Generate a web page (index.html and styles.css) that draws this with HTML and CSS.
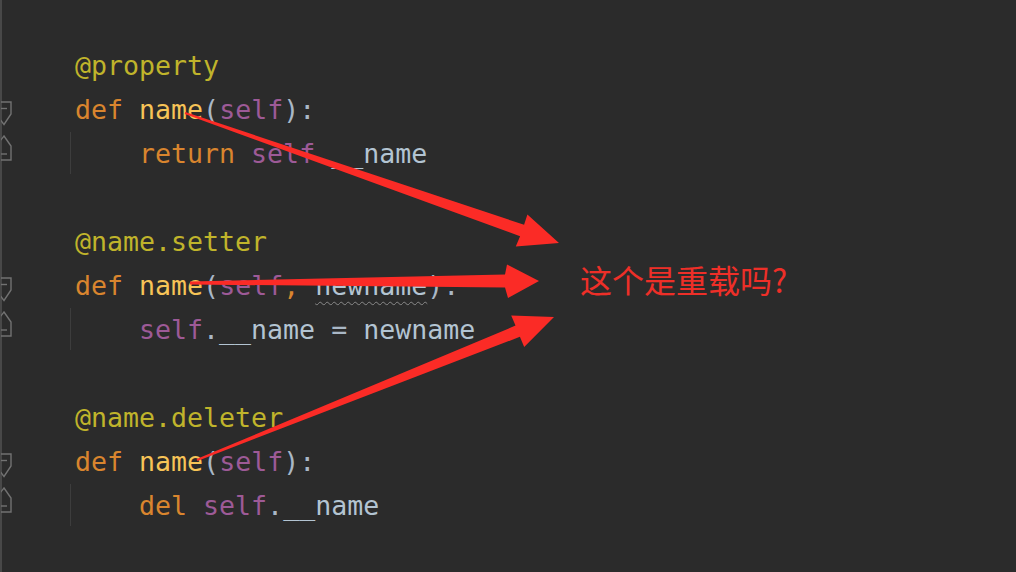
FILE: index.html
```html
<!DOCTYPE html>
<html lang="zh">
<head>
<meta charset="utf-8">
<title>property</title>
<link rel="stylesheet" href="styles.css">
</head>
<body>
<div class="editor">
  <div class="gutter">
    <div class="gline"></div>
    <div class="gline"><svg class="fold fold-start" width="12" height="25" viewBox="0 0 12 25"><path d="M-5 1H10V13L3 23.5L-5 13Z"/><path d="M-3 7.5H6"/></svg></div>
    <div class="gline"><svg class="fold fold-end" width="12" height="26" viewBox="0 0 12 26"><path d="M3 1L10 11V25H-5V11Z"/><path d="M-3 19H6"/></svg></div>
    <div class="gline"></div>
    <div class="gline"></div>
    <div class="gline"><svg class="fold fold-start" width="12" height="25" viewBox="0 0 12 25"><path d="M-5 1H10V13L3 23.5L-5 13Z"/><path d="M-3 7.5H6"/></svg></div>
    <div class="gline"><svg class="fold fold-end" width="12" height="26" viewBox="0 0 12 26"><path d="M3 1L10 11V25H-5V11Z"/><path d="M-3 19H6"/></svg></div>
    <div class="gline"></div>
    <div class="gline"></div>
    <div class="gline"><svg class="fold fold-start" width="12" height="25" viewBox="0 0 12 25"><path d="M-5 1H10V13L3 23.5L-5 13Z"/><path d="M-3 7.5H6"/></svg></div>
    <div class="gline"><svg class="fold fold-end" width="12" height="26" viewBox="0 0 12 26"><path d="M3 1L10 11V25H-5V11Z"/><path d="M-3 19H6"/></svg></div>
  </div>
  <div class="code">
    <div class="line"><span class="tx"><span class="dec">@property</span></span></div>
    <div class="line"><span class="tx"><span class="kw">def</span> <span class="fn">name</span><span class="p">(</span><span class="slf">self</span><span class="p">):</span></span></div>
    <div class="line body"><span class="guide"></span><span class="tx"><span class="kw">return</span> <span class="slf">self</span><span class="p">.</span><span class="id">__name</span></span></div>
    <div class="line"></div>
    <div class="line"><span class="tx"><span class="dec">@name.setter</span></span></div>
    <div class="line"><span class="tx"><span class="kw">def</span> <span class="fn">name</span><span class="p">(</span><span class="slf">self</span><span class="kw">,</span> <span class="id wavy">newname</span><span class="p">):</span></span></div>
    <div class="line body"><span class="guide"></span><span class="tx"><span class="slf">self</span><span class="p">.</span><span class="id">__name</span><span class="p"> = </span><span class="id">newname</span></span></div>
    <div class="line"></div>
    <div class="line"><span class="tx"><span class="dec">@name.deleter</span></span></div>
    <div class="line"><span class="tx"><span class="kw">def</span> <span class="fn">name</span><span class="p">(</span><span class="slf">self</span><span class="p">):</span></span></div>
    <div class="line body"><span class="guide"></span><span class="tx"><span class="kw">del</span> <span class="slf">self</span><span class="p">.</span><span class="id">__name</span></span></div>
  </div>
  <div class="note">这个是重载吗?</div>
</div>
<svg class="arrows" width="1016" height="572" viewBox="0 0 1016 572">
  <polygon points="185.3,112.1 524.1,224.8 527.4,214.4 559,243 515.8,246.6 520.1,236.2 184.7,113.9"/>
  <polygon points="190,281.5 505,274.5 507,264.5 539,281 508,298 505,287.5 190,284.5"/>
  <polygon points="196.6,459.1 515.5,325.6 511.2,315.4 554,317 524.2,347 519.9,336.8 197.4,460.9"/>
</svg>
</body>
</html>
```
FILE: styles.css
```css
html, body {
  margin: 0;
  padding: 0;
  background: #2b2b2b;
}
body {
  width: 1016px;
  height: 572px;
  overflow: hidden;
  position: relative;
}
.editor {
  display: flex;
  height: 572px;
}
.gutter {
  width: 70px;
  border-left: 2px solid #484848;
  padding-top: 43px;
  box-sizing: border-box;
  display: flex;
  flex-direction: column;
}
.gline {
  height: 44px;
}
.fold {
  display: block;
  margin-left: -1px;
  fill: none;
  stroke: #727272;
  stroke-width: 1.4;
}
.fold-start { margin-top: 14px; }
.fold-end { margin-top: 4px; }
.code {
  width: 510px;
  padding-top: 43px;
  box-sizing: border-box;
  font-family: "DejaVu Sans Mono", monospace;
  font-size: 26.6px;
  color: #a9b7c6;
}
.line {
  height: 44px;
  display: flex;
  align-items: center;
  padding-left: 5px;
}
.line.body { padding-left: 0; }
.guide {
  width: 68px;
  height: 42px;
  border-left: 1px solid #3d3d3d;
  flex: none;
}
.tx { white-space: pre; }
.dec { color: #c0b42b; }
.kw { color: #d9852e; }
.fn { color: #f7c457; }
.slf { color: #9d5a97; }
.p { color: #a9b7c6; }
.id { color: #b3c4d2; }
.wavy {
  text-decoration: underline wavy #8a8a8a;
  text-decoration-thickness: 1px;
  text-underline-offset: 6px;
}
.note {
  align-self: center;
  padding-bottom: 14px;
  font-family: "Noto Sans CJK SC", sans-serif;
  font-size: 32px;
  color: #ee2f28;
}
.arrows {
  position: absolute;
  left: 0;
  top: 0;
  fill: #fb2b26;
}
```
